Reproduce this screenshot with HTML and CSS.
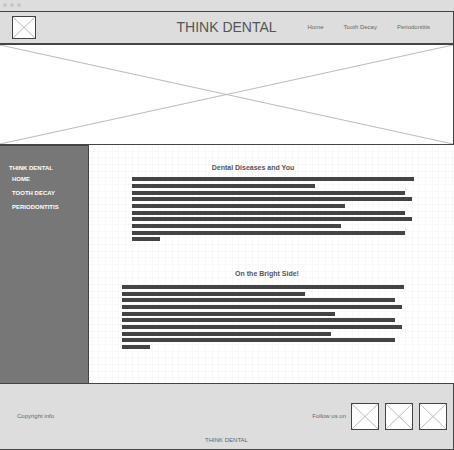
FILE: index.html
```html
<!DOCTYPE html>
<html lang="en">
<head>
<meta charset="utf-8">
<meta name="viewport" content="width=device-width, initial-scale=1">
<title>Think Dental</title>
<link rel="stylesheet" href="styles.css">
</head>
<body>
<div class="chrome"><span class="dot"></span><span class="dot"></span><span class="dot"></span></div>
<header class="header">
  <svg class="placeholder logo" viewBox="0 0 24 23" preserveAspectRatio="none" role="img" aria-label="Logo"><rect x=".5" y=".5" width="23" height="22"/><path d="M1 1L23 22M23 1L1 22"/></svg>
  <h1 class="title">THINK DENTAL</h1>
  <nav class="nav">
    <a href="#">Home</a>
    <a href="#">Tooth Decay</a>
    <a href="#">Periodontitis</a>
  </nav>
</header>
<div class="hero">
  <svg viewBox="0 0 453 99" preserveAspectRatio="none" role="img" aria-label="Banner"><path d="M0 0L453 99M453 0L0 99"/></svg>
</div>
<div class="body">
  <aside class="sidebar">
    <h2 class="side-title">THINK DENTAL</h2>
    <ul class="side-list">
      <li><a href="#">HOME</a></li>
      <li><a href="#">TOOTH DECAY</a></li>
      <li><a href="#">PERIODONTITIS</a></li>
    </ul>
  </aside>
  <main class="main">
    <section class="article diseases">
      <h2 class="heading">Dental Diseases and You</h2>
      <div class="lines">
        <div class="line full"></div>
        <div class="line medium"></div>
        <div class="line long"></div>
        <div class="line longer"></div>
        <div class="line wide"></div>
        <div class="line long"></div>
        <div class="line longer"></div>
        <div class="line broad"></div>
        <div class="line long"></div>
        <div class="line short"></div>
      </div>
    </section>
    <section class="article bright">
      <h2 class="heading">On the Bright Side!</h2>
      <div class="lines">
        <div class="line full"></div>
        <div class="line medium"></div>
        <div class="line long"></div>
        <div class="line longer"></div>
        <div class="line wide"></div>
        <div class="line long"></div>
        <div class="line longer"></div>
        <div class="line broad"></div>
        <div class="line long"></div>
        <div class="line short"></div>
      </div>
    </section>
  </main>
</div>
<footer class="footer">
  <div class="footer-row">
    <span class="label">Copyright info</span>
    <div class="social">
      <span class="label">Follow us on</span>
      <svg class="placeholder social-icon" viewBox="0 0 28 27" role="img" aria-label="Social link"><rect x=".5" y=".5" width="27" height="26"/><path d="M1 1L27 26M27 1L1 26"/></svg>
      <svg class="placeholder social-icon" viewBox="0 0 28 27" role="img" aria-label="Social link"><rect x=".5" y=".5" width="27" height="26"/><path d="M1 1L27 26M27 1L1 26"/></svg>
      <svg class="placeholder social-icon" viewBox="0 0 28 27" role="img" aria-label="Social link"><rect x=".5" y=".5" width="27" height="26"/><path d="M1 1L27 26M27 1L1 26"/></svg>
    </div>
  </div>
  <p class="brand">THINK DENTAL</p>
</footer>
</body>
</html>
```
FILE: styles.css
```css
:root {
  --ink: #444;
  --panel: #ddd;
}

* {
  box-sizing: border-box;
}

body {
  margin: 0;
  min-height: 100vh;
  display: flex;
  flex-direction: column;
  background: #fff;
  color: #666;
  font: 6px/8px "Liberation Sans", Arial, sans-serif;
}

h1, h2, p, ul {
  margin: 0;
  padding: 0;
}

a {
  color: inherit;
  text-decoration: none;
}

.chrome {
  display: flex;
  gap: 3px;
  padding: 3px;
  height: 11px;
  background: var(--panel);
}

.dot {
  width: 4px;
  height: 4px;
  border-radius: 50%;
  background: #c8c8c8;
}

.placeholder {
  display: block;
  flex: none;
}

.placeholder rect {
  fill: #fff;
  stroke: var(--ink);
}

.placeholder path {
  fill: none;
  stroke: #bbb;
}

.header {
  display: flex;
  align-items: center;
  height: 34px;
  padding: 0 23px 0 12px;
  background: var(--panel);
  border: solid var(--ink);
  border-width: 1px 1px 2px 0;
}

.logo {
  width: 24px;
  height: 23px;
}

.title {
  flex: 1;
  padding: 0 31px 2px 0;
  text-align: right;
  font-size: 14px;
  line-height: 18px;
  font-weight: 400;
  color: #555;
}

.nav {
  display: flex;
  gap: 20px;
  padding-bottom: 2px;
}

.hero {
  height: 100px;
  border: solid var(--ink);
  border-width: 0 1px 1px 0;
}

.hero svg {
  display: block;
  width: 100%;
  height: 100%;
}

.hero path {
  fill: none;
  stroke: #bbb;
}

.body {
  flex: 1;
  display: flex;
}

.sidebar {
  flex: none;
  width: 89px;
  padding: 18px 9px;
  background: #777;
  border: solid var(--ink);
  border-width: 1px 1px 0 0;
  color: #fff;
}

.side-title {
  font-size: 6px;
  line-height: 8px;
}

.side-list {
  display: grid;
  gap: 6px;
  padding: 3px 3px 0;
  list-style: none;
  font-weight: 700;
}

.main {
  flex: 1;
  min-width: 0;
  padding-bottom: 31px;
  background-color: #fff;
  background-image:
    linear-gradient(90deg, #f8f8f8 1px, transparent 1px 7px, #f8f8f8 7px 8px, transparent 8px 14px, #f8f8f8 14px 15px, transparent 15px),
    linear-gradient(#f8f8f8 1px, transparent 1px 7px, #f8f8f8 7px 8px, transparent 8px 14px, #f8f8f8 14px 15px, transparent 15px);
  background-size: 20px 20px;
  background-position: 9px 12px;
}

.article {
  width: min-content;
}

.diseases {
  padding: 18px 0 0 43px;
}

.bright {
  padding: 25px 0 0 33px;
}

.heading {
  font-size: 7px;
  line-height: 10px;
  text-align: center;
  color: #555;
}

.diseases .heading {
  padding-right: 40px;
}

.bright .heading {
  padding-left: 8px;
}

.lines {
  width: 282px;
  padding-top: 4px;
}

.bright .lines {
  padding-top: 6px;
}

.line {
  height: 4px;
  margin-bottom: 3px;
  background: var(--ink);
}

.diseases .line:nth-child(3n),
.bright .line:nth-child(3n + 2) {
  margin-bottom: 2px;
}

.full { width: 282px; }
.longer { width: 280px; }
.long { width: 273px; }
.wide { width: 213px; }
.broad { width: 209px; }
.medium { width: 183px; }
.short { width: 28px; }

.footer {
  padding: 19px 6px 5px 17px;
  background: var(--panel);
  border: solid var(--ink);
  border-width: 1px 1px 1px 0;
}

.footer-row {
  display: flex;
  align-items: center;
  justify-content: space-between;
}

.label {
  padding-bottom: 2px;
}

.social {
  display: flex;
  align-items: center;
  gap: 5px;
}

.social-icon {
  width: 28px;
  height: 27px;
}

.social-icon + .social-icon {
  margin-left: 1px;
}

.brand {
  padding: 6px 11px 0 0;
  text-align: center;
}
```
